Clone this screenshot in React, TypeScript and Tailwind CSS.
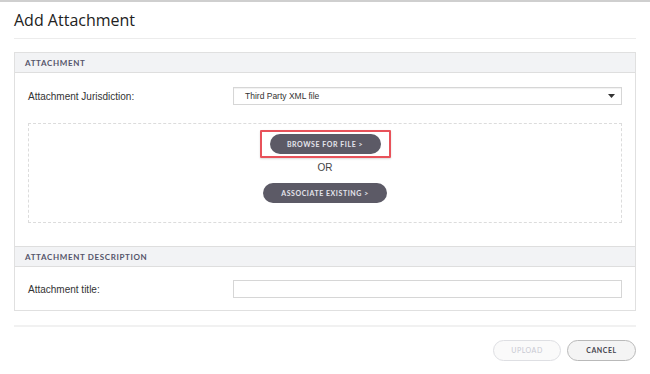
const label = "font-['Liberation_Sans',Arial,sans-serif] text-[10px] text-[#333]";
const caps = "font-['Lato',sans-serif] font-bold uppercase tracking-[0.08em]";

export default function App() {
  return (
    <div className="w-[650px] h-[374px] overflow-hidden bg-white border-t-2 border-[#cfcfcf] px-[14px]">
      <h1 className="font-['Open_Sans',sans-serif] text-[16px] leading-[20px] text-[#222] pt-[8px] pb-[8px] border-b border-[#ececec]">
        Add Attachment
      </h1>

      <div className="mt-[13px] border border-[#e0e0e0]">
        <div className={`h-[20px] bg-[#f2f3f5] border-b border-[#dedede] pl-[10px] flex items-center text-[8px] text-[#55556a] ${caps}`}>
          Attachment
        </div>
        <div className="px-[13px] pt-[14px] pb-[23px]">
          <div className="flex items-center justify-between">
            <span className={label}>Attachment Jurisdiction:</span>
            <div className="w-[389px] h-[18px] border border-[#d6d6d6] shadow-[inset_0_1px_1px_rgba(0,0,0,0.06)] flex items-center justify-between pl-[11px] pr-[6px]">
              <span className="font-['Liberation_Sans',Arial,sans-serif] text-[8.5px] text-[#333]">Third Party XML file</span>
              <svg width="7" height="4" viewBox="0 0 7 4">
                <path d="M0 0 H7 L3.5 4 Z" fill="#333" />
              </svg>
            </div>
          </div>
          <div className="mt-[18px] h-[100px] border border-dashed border-[#dcdcdc] flex flex-col items-center pt-[6px]">
            <div className="flex border-2 border-[#e8525a] rounded-[1px] px-[8px] py-[2px] shadow-[0_1px_2px_rgba(0,0,0,0.15)]">
              <button className={`w-[111px] h-[20px] rounded-full bg-[#5c5a66] text-[#e4e4ec] text-[7px] ${caps}`}>
                Browse for file &gt;
              </button>
            </div>
            <span className="mt-[4px] leading-[12px] font-['Liberation_Sans',Arial,sans-serif] text-[10px] text-[#444]">OR</span>
            <button className={`mt-[9px] w-[124px] h-[20px] rounded-full bg-[#5c5a66] text-[#e4e4ec] text-[7px] ${caps}`}>
              Associate existing &gt;
            </button>
          </div>
        </div>
        <div className={`h-[21px] bg-[#f2f3f5] border-y border-[#dedede] pl-[10px] flex items-center text-[8px] text-[#55556a] ${caps}`}>
          Attachment Description
        </div>
        <div className="px-[13px] pt-[13px] pb-[12px] flex items-center justify-between">
          <span className={label}>Attachment title:</span>
          <div className="w-[389px] h-[18px] border border-[#d6d6d6]" />
        </div>
      </div>

      <div className="mt-[14px] h-[2px] bg-[#f1f1f1]" />
      <div className="mt-[13px] flex justify-end gap-[6px]">
        <button className="w-[68px] h-[21px] rounded-full border border-[#dedfe3] bg-[#fafafa] text-[#c8c9d2] text-[7px] font-normal uppercase tracking-[0.08em] font-['Lato',sans-serif]">
          Upload
        </button>
        <button className={`w-[69px] h-[21px] rounded-full border border-[#b9b9b9] bg-[#f4f4f4] text-[#44444f] text-[7px] ${caps}`}>
          Cancel
        </button>
      </div>
    </div>
  );
}
